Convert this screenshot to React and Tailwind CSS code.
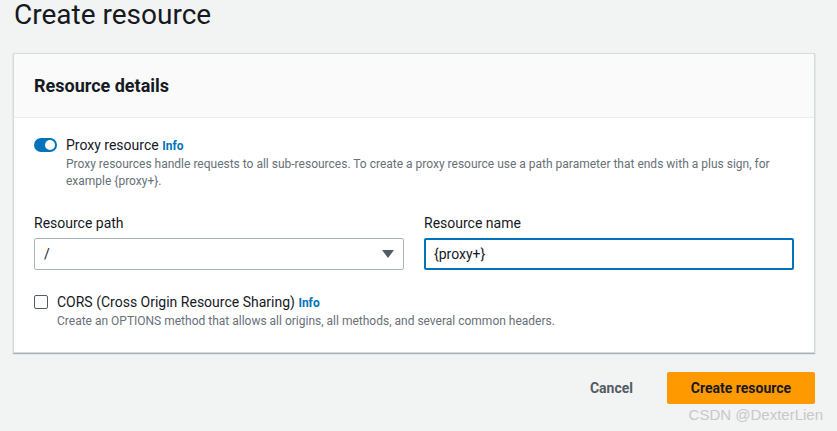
const proxyText =
  "Proxy resources handle requests to all sub-resources. To create a proxy resource use a path parameter that ends with a plus sign, for example {proxy+}.";

export default function App() {
  return (
    <div
      className="w-[837px] h-[431px] bg-[#f2f3f3] overflow-hidden relative"
      style={{ fontFamily: '"Roboto", "Liberation Sans", sans-serif' }}
    >
      <h1 className="pl-[14px] pt-0 text-[28px] leading-[30px] text-[#16191f]">Create resource</h1>

      <div className="ml-[13px] mt-[23px] w-[802px] bg-white border border-[#d5dbdb] shadow-[0_1px_1px_0_rgba(0,28,36,0.3)]">
        <div className="h-[64px] bg-[#fafafa] border-b border-[#eaeded] flex items-center pl-[20px]">
          <h2 className="text-[18px] font-bold text-[#16191f]">Resource details</h2>
        </div>

        <div className="px-[20px] pt-[17px] pb-[22px]">
          <div className="flex items-start gap-[9px]">
            <span className="mt-[3px] w-[23px] h-[14px] rounded-full bg-[#0073bb] relative shrink-0">
              <span className="absolute right-[2px] top-[2px] w-[10px] h-[10px] rounded-full bg-white" />
            </span>
            <div>
              <div className="text-[14px] leading-[20px] text-[#16191f]">
                Proxy resource <span className="text-[12px] font-bold text-[#0073bb]">Info</span>
              </div>
              <p className="text-[12px] leading-[17px] text-[#687078] w-[730px]">{proxyText}</p>
            </div>
          </div>

          <div className="grid grid-cols-2 gap-[20px] mt-[23px]">
            <div>
              <label className="block text-[14px] leading-[20px] text-[#16191f] mb-[5px]">Resource path</label>
              <div className="h-[32px] border border-[#aab7b8] rounded-[2px] flex items-center justify-between px-[9px]">
                <span className="text-[14px] text-[#16191f]">/</span>
                <svg width="12" height="8" viewBox="0 0 12 8">
                  <path d="M0 0 H12 L6 8 Z" fill="#545b64" />
                </svg>
              </div>
            </div>
            <div>
              <label className="block text-[14px] leading-[20px] text-[#16191f] mb-[5px]">Resource name</label>
              <div className="h-[32px] border-2 border-[#0073bb] rounded-[2px] flex items-center px-[8px]">
                <span className="text-[14px] text-[#16191f]">{"{proxy+}"}</span>
              </div>
            </div>
          </div>

          <div className="flex items-start gap-[9px] mt-[22px]">
            <span className="mt-[3px] w-[14px] h-[14px] border border-[#545b64] rounded-[2px] bg-white shrink-0" />
            <div>
              <div className="text-[14px] leading-[20px] text-[#16191f]">
                CORS (Cross Origin Resource Sharing) <span className="text-[12px] font-bold text-[#0073bb]">Info</span>
              </div>
              <p className="text-[12px] leading-[17px] text-[#687078]">
                Create an OPTIONS method that allows all origins, all methods, and several common headers.
              </p>
            </div>
          </div>
        </div>
      </div>

      <div className="flex justify-end items-center mt-[19px] mr-[22px] gap-[14px]">
        <button className="px-[20px] h-[32px] text-[14px] font-bold text-[#545b64]">Cancel</button>
        <button className="w-[148px] h-[32px] rounded-[2px] bg-[#ff9900] text-[14px] font-bold text-[#16191f]">
          Create resource
        </button>
      </div>

      <div className="absolute right-[14px] bottom-[5px] text-[15px] text-[#c8c8c8]" style={{ fontFamily: '"Liberation Sans", sans-serif' }}>
        CSDN @DexterLien
      </div>
    </div>
  );
}
